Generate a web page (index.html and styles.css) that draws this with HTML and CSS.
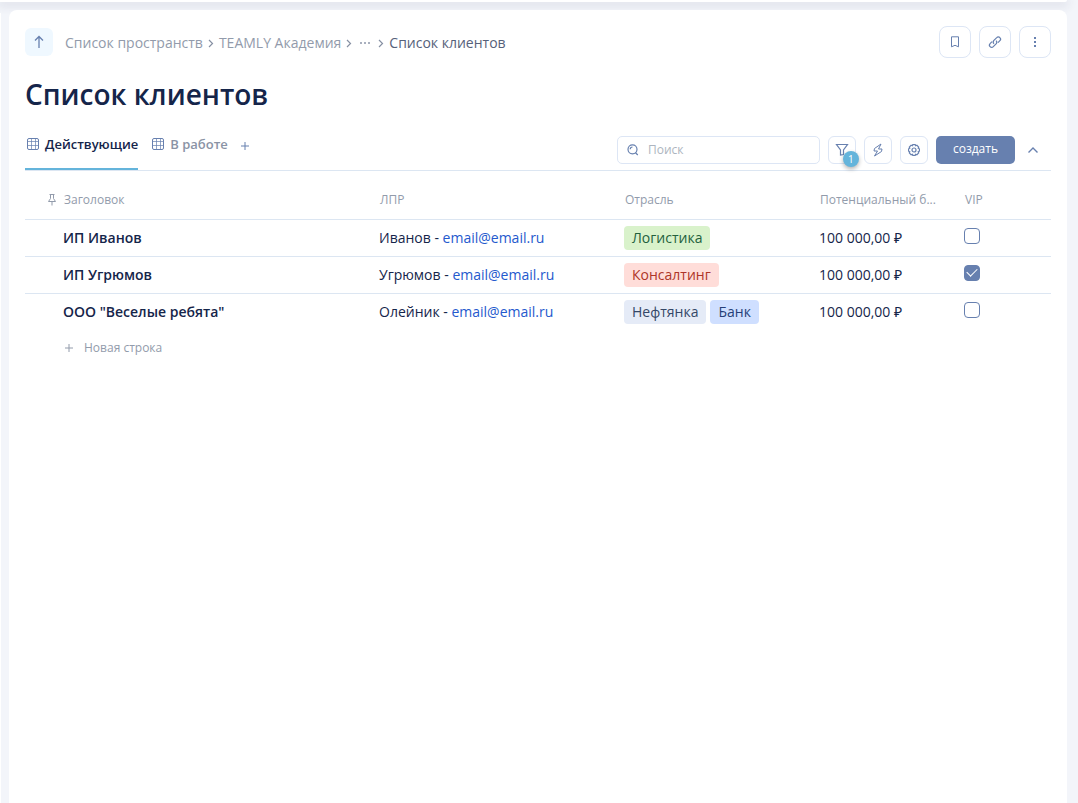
FILE: index.html
```html
<!DOCTYPE html>
<html lang="ru">
<head>
<meta charset="utf-8">
<meta name="viewport" content="width=device-width, initial-scale=1">
<title>Список клиентов</title>
<link rel="stylesheet" href="styles.css">
</head>
<body>
<div class="topbar"></div>
<div class="shell">
  <aside class="side-edge"></aside>
  <main class="card">
    <header class="page-head">
      <button class="up-btn" type="button" aria-label="На уровень выше">
        <svg width="16" height="16" viewBox="0 0 16 16"><path d="M8 14V3M4 6.500L8 2.500l4 4"/></svg>
      </button>
      <nav class="crumbs" aria-label="Навигация">
        <a href="#">Список пространств</a>
        <svg class="sep" width="6" height="10" viewBox="0 0 6 10"><path d="M1 2l3.500 3.500L1 9"/></svg>
        <a href="#">TEAMLY Академия</a>
        <svg class="sep" width="6" height="10" viewBox="0 0 6 10"><path d="M1 2l3.500 3.500L1 9"/></svg>
        <button class="crumb-more" type="button" aria-label="Ещё">
          <svg width="12" height="4" viewBox="0 0 12 4"><path d="M1 1h2v2H1zM5 1h2v2H5zM9 1h2v2H9z"/></svg>
        </button>
        <svg class="sep" width="6" height="10" viewBox="0 0 6 10"><path d="M1 2l3.500 3.500L1 9"/></svg>
        <a class="current" href="#">Список клиентов</a>
      </nav>
      <div class="head-actions">
        <button class="square-btn" type="button" aria-label="В закладки">
          <svg width="16" height="16" viewBox="0 0 16 16"><path d="M4.500 2.800h7v10L8 11.300l-3.500 1.500z"/></svg>
        </button>
        <button class="square-btn" type="button" aria-label="Скопировать ссылку">
          <svg class="mid" width="16" height="16" viewBox="0 0 16 16"><path d="M7 9.700a2.300 2.300 0 0 1-.3-3.100l3-3a2.200 2.200 0 0 1 3.200 0 2.200 2.200 0 0 1 0 3.100l-1.900 1.900"/><path d="M9 6.600a2.300 2.300 0 0 1 .3 3.100l-3 3a2.200 2.200 0 0 1-3.200 0 2.200 2.200 0 0 1 0-3.100L5 7.700"/></svg>
        </button>
        <button class="square-btn" type="button" aria-label="Меню">
          <svg class="solid" width="16" height="16" viewBox="0 0 16 16"><path d="M7 3h2v2H7zM7 7h2v2H7zM7 11h2v2H7z"/></svg>
        </button>
      </div>
    </header>

    <h1 class="title">Список клиентов</h1>

    <div class="toolbar">
      <div class="tabs">
        <button class="tab active" type="button">
          <svg width="16" height="16" viewBox="0 0 16 16"><rect x="2.500" y="2.500" width="11" height="11" rx="1.500"/><path class="thin" d="M6.500 2.500v11M10.500 2.500v11M2.500 5.500h11M2.500 9.500h11"/></svg>
          Действующие
        </button>
        <button class="tab" type="button">
          <svg width="16" height="16" viewBox="0 0 16 16"><rect x="2.500" y="2.500" width="11" height="11" rx="1.500"/><path class="thin" d="M6.500 2.500v11M10.500 2.500v11M2.500 5.500h11M2.500 9.500h11"/></svg>
          В работе
        </button>
        <button class="tab-add" type="button" aria-label="Добавить вид">
          <svg width="10" height="10" viewBox="0 0 10 10"><path d="M5 1v8M1 5h8"/></svg>
        </button>
      </div>
      <div class="tools">
        <label class="search">
          <svg class="mid" width="16" height="16" viewBox="0 0 16 16"><circle cx="6.500" cy="7.300" r="4.500"/><path d="M9.500 10.800l2.300 2.200M4.200 7.300A2.300 2.300 0 0 1 6.500 5"/></svg>
          <input type="search" placeholder="Поиск" aria-label="Поиск">
        </label>
        <button class="tool-btn" type="button" aria-label="Фильтр, активно: 1">
          <svg class="mid" width="16" height="16" viewBox="0 0 16 16"><path d="M2.500 2.500h11L9.500 8v4.500l-3 .5V8z"/></svg>
          <span class="badge">1</span>
        </button>
        <button class="tool-btn" type="button" aria-label="Автоматизация">
          <svg width="16" height="16" viewBox="0 0 16 16"><path d="M11 2L4.500 6.500L4 9h3.500l-3 5L11.500 9.500l.5-2.500H8.500z"/></svg>
        </button>
        <button class="tool-btn" type="button" aria-label="Настройки">
          <svg class="mid" width="16" height="16" viewBox="0 0 16 16"><path d="M6.800 2.600h2.400l.5 1.200 1.200-.5 1.800 1.800-.5 1.200 1.200.5v2.400l-1.200.5.5 1.200-1.800 1.800-1.200-.5-.5 1.200H6.800l-.5-1.200-1.200.5-1.800-1.800.5-1.200-1.200-.5V6.800l1.200-.5-.5-1.200 1.800-1.800 1.200.5z"/><circle cx="8" cy="8" r="2"/></svg>
        </button>
        <button class="create-btn" type="button">создать</button>
        <button class="collapse-btn" type="button" aria-label="Свернуть">
          <svg width="12" height="8" viewBox="0 0 12 8"><path d="M1.500 6.500L6 2l4.500 4.500"/></svg>
        </button>
      </div>
    </div>

    <table class="clients">
      <colgroup><col class="c-name"><col class="c-person"><col class="c-field"><col class="c-budget"><col></colgroup>
      <thead>
        <tr>
          <th scope="col"><span class="pinned"><svg width="10" height="14" viewBox="0 0 10 14"><path d="M2.500 1.500h5M3.500 1.500v4L1.500 8.500h7l-2-3v-4M5 8.500v4"/></svg>Заголовок</span></th>
          <th scope="col">ЛПР</th>
          <th scope="col">Отрасль</th>
          <th scope="col">Потенциальный б...</th>
          <th scope="col">VIP</th>
        </tr>
      </thead>
      <tbody>
        <tr>
          <td>ИП Иванов</td>
          <td>Иванов - <a href="mailto:email@email.ru">email@email.ru</a></td>
          <td><span class="tag green">Логистика</span></td>
          <td>100 000,00 ₽</td>
          <td><input class="check" type="checkbox" aria-label="VIP: ИП Иванов"></td>
        </tr>
        <tr>
          <td>ИП Угрюмов</td>
          <td>Угрюмов - <a href="mailto:email@email.ru">email@email.ru</a></td>
          <td><span class="tag red">Консалтинг</span></td>
          <td>100 000,00 ₽</td>
          <td><input class="check" type="checkbox" aria-label="VIP: ИП Угрюмов" checked></td>
        </tr>
        <tr>
          <td>ООО "Веселые ребята"</td>
          <td>Олейник - <a href="mailto:email@email.ru">email@email.ru</a></td>
          <td><span class="tags"><span class="tag grey">Нефтянка</span><span class="tag blue">Банк</span></span></td>
          <td>100 000,00 ₽</td>
          <td><input class="check" type="checkbox" aria-label="VIP: Веселые ребята"></td>
        </tr>
      </tbody>
    </table>
    <button class="new-row" type="button">
      <svg width="10" height="10" viewBox="0 0 10 10"><path d="M5 1v8M1 5h8"/></svg>
      Новая строка
    </button>
  </main>
</div>
</body>
</html>
```

FILE: styles.css
```css
* { box-sizing: border-box; }

body {
  margin: 0;
  min-height: 100vh;
  display: flex;
  flex-direction: column;
  background: #f3f5fa;
  color: #15254a;
  font: 14px/20px "Open Sans", "Noto Sans", sans-serif;
}

button {
  padding: 0;
  border: 0;
  background: none;
  color: inherit;
  font: inherit;
  cursor: pointer;
}

a { color: inherit; text-decoration: none; }

svg {
  display: block;
  flex: none;
  fill: none;
  stroke: #6780af;
  stroke-width: 1;
}

svg.solid { fill: #6780af; stroke: none; }
svg.mid { stroke-width: 1.2; }
svg .thin { stroke-opacity: .7; }

.topbar {
  height: 2px;
  margin-right: 11px;
  background: #fff;
  border-bottom-right-radius: 8px;
  box-shadow: 0 2px 10px 2px rgba(40, 50, 80, .12);
}

.shell {
  flex: 1;
  display: flex;
  gap: 8px;
  padding: 8px 11px 0 0;
}

.side-edge {
  width: 1px;
  margin-top: 3px;
  background: #fff;
}

.card {
  position: relative;
  flex: 1;
  min-width: 0;
  padding: 16px;
  background: #fff;
  border-radius: 8px 8px 0 0;
}

.page-head {
  display: flex;
  align-items: center;
  gap: 12px;
}

.up-btn {
  display: grid;
  place-items: center;
  width: 28px;
  height: 28px;
  border-radius: 6px;
  background: #eff8ff;
}

.up-btn svg { stroke-width: 1.3; }

.crumbs {
  display: flex;
  align-items: center;
  gap: 5px;
  padding-top: 2px;
  color: #929bab;
}

.crumbs .sep { stroke: #8690a3; stroke-width: 1.2; }
.crumbs .current { color: #56617a; }

.crumb-more { padding: 0 2px; }
.crumb-more svg { fill: #a9b0bf; stroke: none; }

.head-actions {
  display: flex;
  gap: 8px;
  margin-left: auto;
}

.square-btn,
.tool-btn {
  display: grid;
  place-items: center;
  border: 1px solid #dde6f5;
  background: #fff;
}

.square-btn { width: 32px; height: 32px; border-radius: 8px; }

.title {
  margin: 16px 0;
  font-size: 28px;
  line-height: 40px;
  font-weight: 600;
}

.toolbar {
  display: flex;
  justify-content: space-between;
  border-bottom: 1px solid #dce6f2;
}

.tabs {
  display: flex;
  gap: 12px;
}

.tab {
  display: flex;
  align-items: flex-start;
  gap: 4px;
  padding-top: 4px;
  border-bottom: 2px solid transparent;
  color: #8a93a5;
  font-size: 13px;
  line-height: 20px;
  font-weight: 600;
}

.tab svg { margin-top: 2px; }

.tab.active {
  border-color: #64b4db;
  color: #15254a;
}

.tab-add {
  display: flex;
  align-items: flex-start;
  padding-top: 11px;
}

.tools {
  display: flex;
  gap: 8px;
  padding: 6px 8px 6px 0;
}

.search {
  display: flex;
  align-items: center;
  gap: 6px;
  width: 203px;
  padding: 0 8px;
  border: 1px solid #dde6f5;
  border-radius: 5px;
}

.search input {
  flex: 1;
  min-width: 0;
  padding: 0;
  border: 0;
  outline: 0;
  background: none;
  color: #15254a;
  font: inherit;
  font-size: 12px;
}

.search input::placeholder { color: #adb5c0; opacity: 1; }

.tool-btn {
  position: relative;
  width: 28px;
  height: 28px;
  border-radius: 6px;
}

.badge {
  position: absolute;
  right: -4px;
  bottom: -4px;
  width: 16px;
  height: 16px;
  border-radius: 8px;
  background: #64b4db;
  color: #fff;
  font-size: 10px;
  line-height: 16px;
  text-align: center;
  box-shadow: 0 2px 4px rgba(0, 0, 0, .3);
}

.create-btn {
  padding: 0 17px 2px;
  border-radius: 5px;
  background: #6780af;
  color: #fff;
  font-size: 12px;
  font-weight: 500;
}

.collapse-btn {
  display: grid;
  place-items: center;
  width: 20px;
}

.collapse-btn svg { stroke-width: 1.4; }

.clients {
  width: 100%;
  table-layout: fixed;
  border-collapse: collapse;
}

.c-name { width: 346px; }
.c-person { width: 245px; }
.c-field { width: 195px; }
.c-budget { width: 145px; }

.clients th,
.clients td {
  padding: 0 8px;
  text-align: left;
  white-space: nowrap;
}

.clients th {
  height: 48px;
  padding: 10px 8px 0 9px;
  color: #929bab;
  font-size: 12px;
  font-weight: 400;
}

.clients td { height: 37px; }
.clients tbody tr { border-top: 1px solid #dce6f2; }

.clients th:first-child { padding-left: 22px; }

.clients td:first-child {
  padding-left: 38px;
  font-weight: 600;
}

.clients a { color: #2459cd; }

.pinned { display: flex; align-items: center; gap: 7px; }
.pinned svg { stroke: #929bab; }

.tags { display: flex; gap: 4px; }

.tag {
  display: inline-block;
  padding: 2px 8px;
  border-radius: 4px;
}

.tag.green { background: #d9f2cb; color: #23613d; }
.tag.red { background: #ffddd9; color: #ae3528; }
.tag.grey { background: #e5ebf7; color: #344767; }
.tag.blue { background: #cfdfff; color: #253f78; }

.check {
  appearance: none;
  display: grid;
  place-items: center;
  width: 16px;
  height: 16px;
  margin: 0 0 4px;
  border: 1px solid #6780af;
  border-radius: 4px;
  background: #fff;
}

.check:checked { background: #6780af; }

.check:checked::before {
  content: "";
  width: 9px;
  height: 5px;
  margin-bottom: 3px;
  border: solid #fff;
  border-width: 0 0 1px 1px;
  transform: rotate(-45deg);
}

.new-row {
  display: flex;
  align-items: center;
  gap: 10px;
  margin: 8px 0 0 39px;
  color: #929bab;
  font-size: 12px;
}

.new-row svg { stroke: #929bab; }
```
